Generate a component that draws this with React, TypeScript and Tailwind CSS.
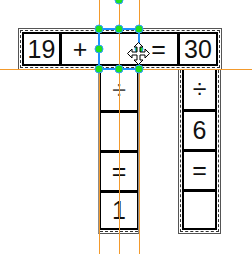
// Equation tile board with a selected tile being dragged
const font = { fontFamily: '"Liberation Sans", Arial, sans-serif' }

function Cell({ children, className = '' }: { children?: React.ReactNode; className?: string }) {
  return (
    <div className={'flex items-center justify-center text-[25px] leading-none text-[#111] ' + className}>
      {children}
    </div>
  )
}

function Handle({ x, y }: { x: number; y: number }) {
  return (
    <div
      className="absolute h-[9px] w-[9px] -translate-x-1/2 -translate-y-1/2 rounded-full border-[1.5px] border-[#2f9bff] bg-[#1fe01f]"
      style={{ left: x, top: y }}
    />
  )
}

export default function App() {
  const handles = [
    [119, 0],
    [99, 29], [119, 29], [139, 29],
    [99, 49], [139, 49],
    [99, 69], [119, 69], [139, 69],
  ]

  return (
    <div className="relative h-[254px] w-[252px] overflow-hidden bg-white pl-[18px] pt-[28px]" style={font}>
      <div className="grid grid-cols-[42px_38px_42px_38px_44px] grid-rows-[42px_164px]">
        {/* top row: 19 + [ ] = 30 */}
        <div className="col-span-5 border border-[#555] bg-white p-px">
          <div className="h-full border border-dashed border-[#333] p-px">
            <div className="flex h-full border-2 border-black">
              <Cell className="w-[35px]">19</Cell>
              <div className="w-[3px] bg-black" />
              <Cell className="w-[36px]">+</Cell>
              <div className="w-[2px] bg-black" />
              <Cell className="w-[38px]" />
              <div className="w-[2px] bg-[#333]" />
              <Cell className="w-[37px]">=</Cell>
              <div className="w-[3px] bg-black" />
              <Cell className="flex-1">30</Cell>
            </div>
          </div>
        </div>

        {/* middle column under the selected tile */}
        <div className="col-start-3 row-start-2 flex flex-col border-x-2 border-b border-x-[#8c8c8c] border-b-[#555] bg-white pb-px">
          <div className="flex flex-1 flex-col border-b border-dashed border-[#333] pb-px">
            <div className="flex flex-1 flex-col border-x border-b-2 border-black">
              <Cell className="h-[40px] text-[#555]">÷</Cell>
              <Cell className="h-[40px] border-t-[3px] border-black" />
              <Cell className="h-[40px] border-t-[3px] border-black">=</Cell>
              <Cell className="flex-1 border-t-[3px] border-black">1</Cell>
            </div>
          </div>
        </div>

        {/* right column */}
        <div className="col-start-5 row-start-2 flex w-[43px] flex-col border border-t-0 border-[#555] bg-white px-px pb-px">
          <div className="flex flex-1 flex-col border border-t-0 border-dashed border-[#333] px-px pb-px">
            <div className="flex flex-1 flex-col border-2 border-t-0 border-black">
              <Cell className="h-[39px]">÷</Cell>
              <Cell className="h-[40px] border-t-[3px] border-black">6</Cell>
              <Cell className="h-[40px] border-t-[3px] border-black">=</Cell>
              <Cell className="flex-1 border-t-[3px] border-black" />
            </div>
          </div>
        </div>
      </div>

      {/* snapping guides */}
      <div className="absolute left-0 top-[69px] h-px w-full bg-[#f39a2c]" />
      <div className="absolute left-[99px] top-0 h-full w-px bg-[#f39a2c]" />
      <div className="absolute left-[119px] top-0 h-full w-px bg-[#f39a2c]" />
      <div className="absolute left-[139px] top-0 h-full w-px bg-[#f39a2c]" />

      {/* selection */}
      <div className="absolute left-[98px] top-[28px] h-[42px] w-[42px] border-2 border-[#1f8fff]" />
      {handles.map(([x, y]) => (
        <Handle key={x + '-' + y} x={x} y={y} />
      ))}

      {/* move cursor */}
      <svg className="absolute left-[127px] top-[42px]" width="23" height="23" viewBox="0 0 23 23">
        <polygon
          points="11.5,0.5 16,5 13,5 13,10 18,10 18,7 22.5,11.5 18,16 18,13 13,13 13,18 16,18 11.5,22.5 7,18 10,18 10,13 5,13 5,16 0.5,11.5 5,7 5,10 10,10 10,5 7,5"
          fill="#fff"
          stroke="#000"
          strokeWidth="1"
          strokeLinejoin="miter"
        />
      </svg>
    </div>
  )
}
